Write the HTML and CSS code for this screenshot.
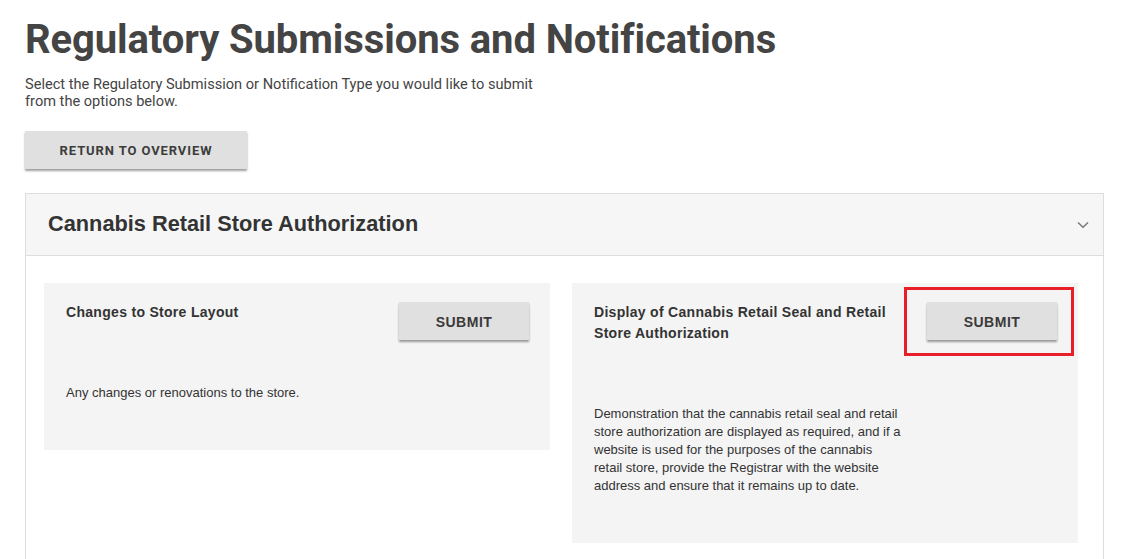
FILE: index.html
```html
<!DOCTYPE html>
<html lang="en">
<head>
<meta charset="utf-8">
<title>Regulatory Submissions and Notifications</title>
<link rel="stylesheet" href="styles.css">
</head>
<body>
<main class="page">
  <h1 class="page-title">Regulatory Submissions and Notifications</h1>
  <p class="intro">Select the Regulatory Submission or Notification Type you would like to submit from the options below.</p>
  <button class="btn btn-return" type="button">Return to Overview</button>

  <section class="accordion">
    <header class="accordion-header">
      <h2 class="accordion-title">Cannabis Retail Store Authorization</h2>
      <svg class="chevron" width="12" height="8" viewBox="0 0 12 8" aria-hidden="true">
        <path d="M1 1.5 L6 6.3 L11 1.5" fill="none" stroke="#777" stroke-width="1.4"/>
      </svg>
    </header>
    <div class="accordion-body">
      <article class="card">
        <div class="card-text">
          <h3 class="card-title">Changes to Store Layout</h3>
          <p class="card-desc">Any changes or renovations to the store.</p>
        </div>
        <div class="card-action">
          <button class="btn btn-submit" type="button">Submit</button>
        </div>
      </article>
      <article class="card">
        <div class="card-text">
          <h3 class="card-title">Display of Cannabis Retail Seal and Retail Store Authorization</h3>
          <p class="card-desc">Demonstration that the cannabis retail seal and retail store authorization are displayed as required, and if a website is used for the purposes of the cannabis retail store, provide the Registrar with the website address and ensure that it remains up to date.</p>
        </div>
        <div class="card-action">
          <button class="btn btn-submit" type="button">Submit</button>
          <span class="highlight"></span>
        </div>
      </article>
    </div>
  </section>
</main>
</body>
</html>
```

FILE: styles.css
```css
* { box-sizing: border-box; }

html, body {
  margin: 0;
  padding: 0;
  background: #ffffff;
}

.page {
  padding: 0 24px 0 25px;
  font-family: Roboto, "Liberation Sans", Arial, sans-serif;
  color: #444444;
}

.page-title {
  margin: 16px 0 0;
  font-family: Roboto, "Liberation Sans", Arial, sans-serif;
  font-weight: 700;
  font-size: 40px;
  line-height: 48px;
  color: #444444;
  letter-spacing: -0.1px;
}

.intro {
  margin: 12px 0 0;
  max-width: 530px;
  font-size: 14.6px;
  line-height: 17px;
  color: #444444;
}

.btn {
  display: inline-flex;
  align-items: center;
  justify-content: center;
  border: none;
  background: #e0e0e0;
  box-shadow: 0 2px 2px rgba(0, 0, 0, 0.38);
  text-transform: uppercase;
  cursor: pointer;
  padding: 0;
}

.btn-return {
  margin-top: 21px;
  width: 222px;
  height: 38px;
  font-family: Roboto, "Liberation Sans", Arial, sans-serif;
  font-weight: 700;
  font-size: 13px;
  letter-spacing: 0.9px;
  color: #3c3c3c;
}

.accordion {
  margin-top: 24px;
  border: 1px solid #dddddd;
  font-family: "Liberation Sans", Arial, sans-serif;
  color: #333333;
  height: 400px;
}

.accordion-header {
  display: flex;
  align-items: center;
  justify-content: space-between;
  height: 62px;
  padding: 0 14px 1px 22px;
  background: #f6f6f6;
  border-bottom: 1px solid #dddddd;
}

.accordion-title {
  margin: 0;
  font-family: "Liberation Sans", Arial, sans-serif;
  font-weight: 700;
  font-size: 21.75px;
  color: #333333;
}

.chevron {
  display: block;
  margin-top: 2px;
}

.accordion-body {
  display: grid;
  grid-template-columns: 1fr 1fr;
  column-gap: 22px;
  align-items: start;
  padding: 27px 25px 0 18px;
}

.card {
  display: flex;
  align-items: flex-start;
  background: #f4f4f4;
  padding: 19px 21px 48px 22px;
}

.card-text {
  width: 308px;
}

.card-title {
  margin: 0;
  font-size: 14px;
  line-height: 21px;
  font-weight: 700;
  letter-spacing: 0.3px;
  color: #333333;
}

.card-desc {
  margin: 61px 0 0;
  font-size: 13px;
  line-height: 18px;
  color: #333333;
}

.card-action {
  position: relative;
  margin-left: auto;
}

.btn-submit {
  width: 130px;
  height: 38px;
  padding-top: 1px;
  font-family: "Liberation Sans", Arial, sans-serif;
  font-weight: 700;
  font-size: 14px;
  letter-spacing: 0.5px;
  color: #3a3a3a;
}

.highlight {
  position: absolute;
  top: -15px;
  left: -23px;
  right: -17px;
  bottom: -16px;
  border: 3px solid #e81e28;
  pointer-events: none;
}
```
